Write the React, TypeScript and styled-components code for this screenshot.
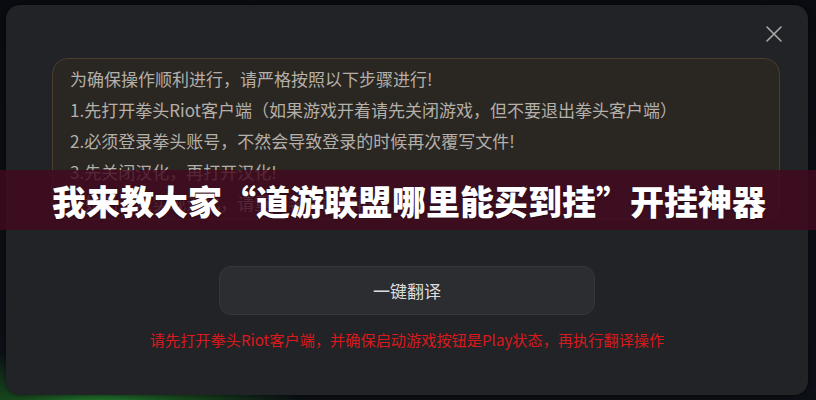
import React from "react";
import styled, { createGlobalStyle } from "styled-components";

const GlobalStyle = createGlobalStyle`
  html, body {
    margin: 0;
    padding: 0;
    background: #0b0d12;
  }
  * {
    box-sizing: border-box;
  }
`;

const cjk = `"Noto Sans CJK SC", "Noto Sans", sans-serif`;

const Screen = styled.div`
  position: relative;
  width: 816px;
  height: 400px;
  overflow: hidden;
  padding: 5px 8px 5px 6px;
  background:
    radial-gradient(ellipse 200px 60px at 100px 405px, #23782f 0%, #17471d 45%, rgba(11, 13, 18, 0) 100%),
    linear-gradient(180deg, #0a0c12 0%, #0d1016 100%);
  font-family: ${cjk};
`;

const Modal = styled.div`
  height: 390px;
  border-radius: 14px;
  background: #222326;
  box-shadow: 0 0 6px rgba(0, 0, 0, 0.6);
  display: flex;
  flex-direction: column;
  align-items: center;
`;

const Header = styled.div`
  align-self: stretch;
  height: 53px;
  display: flex;
  justify-content: flex-end;
  align-items: center;
  padding: 4px 24px 0 0;
`;

const CloseButton = styled.button`
  border: none;
  background: none;
  padding: 0;
  width: 20px;
  height: 20px;
  display: flex;
  align-items: center;
  justify-content: center;
  color: #a9a9a9;
  cursor: pointer;
`;

const Notice = styled.div`
  align-self: stretch;
  margin: 0 28px 0 46px;
  height: 162px;
  border: 1px solid #4a3e2e;
  border-radius: 16px;
  background: #2a2723;
  padding: 4px 17px;
`;

const NoticeLine = styled.p`
  margin: 0;
  font-size: 17px;
  line-height: 31px;
  color: #b4afa8;
  white-space: nowrap;
`;

const TranslateButton = styled.button`
  margin-top: 46px;
  width: 376px;
  height: 49px;
  border-radius: 12px;
  border: 1px solid #36373b;
  background: #2c2d31;
  color: #dcdcdc;
  font-family: ${cjk};
  font-size: 17px;
  cursor: pointer;
`;

const Warning = styled.p`
  margin: 15px 0 0;
  font-size: 15.2px;
  line-height: 18px;
  color: #d81a1d;
  white-space: nowrap;
`;

const Banner = styled.div`
  position: absolute;
  left: 0;
  right: 0;
  top: 170px;
  height: 60px;
  background: rgba(66, 8, 30, 0.82);
  display: flex;
  align-items: center;
  justify-content: center;
  padding-left: 2px;
`;

const BannerTitle = styled.h1`
  margin: 0;
  font-family: ${cjk};
  font-size: 34px;
  font-weight: 900;
  color: #ffffff;
  white-space: nowrap;
  text-shadow: 0 1px 2px rgba(0, 0, 0, 0.4);
`;

const steps = [
  "为确保操作顺利进行，请严格按照以下步骤进行!",
  "1.先打开拳头Riot客户端（如果游戏开着请先关闭游戏，但不要退出拳头客户端）",
  "2.必须登录拳头账号，不然会导致登录的时候再次覆写文件!",
  "3.先关闭汉化，再打开汉化!",
  "4.如仍无法实现汉化，请重启客户端后再试",
];

function CloseIcon() {
  return (
    <svg width="16" height="16" viewBox="0 0 16 16" fill="none">
      <path d="M1 1L15 15M15 1L1 15" stroke="currentColor" strokeWidth="1.6" strokeLinecap="round" />
    </svg>
  );
}

export default function App() {
  return (
    <>
      <GlobalStyle />
      <Screen>
        <Modal>
          <Header>
            <CloseButton aria-label="关闭">
              <CloseIcon />
            </CloseButton>
          </Header>
          <Notice>
            {steps.map((s) => (
              <NoticeLine key={s}>{s}</NoticeLine>
            ))}
          </Notice>
          <TranslateButton>一键翻译</TranslateButton>
          <Warning>请先打开拳头Riot客户端，并确保启动游戏按钮是Play状态，再执行翻译操作</Warning>
        </Modal>
        <Banner>
          <BannerTitle>我来教大家“道游联盟哪里能买到挂”开挂神器</BannerTitle>
        </Banner>
      </Screen>
    </>
  );
}
